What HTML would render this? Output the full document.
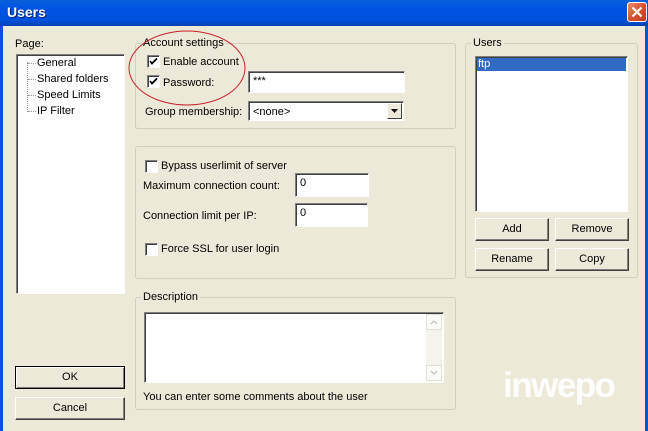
<!DOCTYPE html>
<html><head><meta charset="utf-8"><style>
*{margin:0;padding:0;box-sizing:border-box}
body{width:648px;height:431px;overflow:hidden;background:#ece9d8;font-family:"Liberation Sans",sans-serif;font-size:11px;color:#000;position:relative}
.a{position:absolute;white-space:nowrap}
.title{left:0;top:0;width:648px;height:26px;background:linear-gradient(#0a5fd8,#0054e3 30%,#0050dc 80%,#0841b0)}
.lb{left:0;top:26px;width:3px;height:405px;background:#0a50d8}
.rb{right:0;top:26px;width:3px;height:405px;background:#0a50d8}
.grp{border:1px solid #d0d0bf;border-radius:3px}
.leg{background:#ece9d8;padding:0 2px}
.sunk{background:#fff;border:1px solid;border-color:#7f7f7f #fff #fff #7f7f7f;box-shadow:inset 1px 1px 0 #404040}
.cb{width:13px;height:13px;background:#fff;border:1px solid;border-color:#7f7f7f #fff #fff #7f7f7f;box-shadow:inset 1px 1px 0 #404040}
.btn{border:1px solid;border-color:#fff #404040 #404040 #fff;box-shadow:inset -1px -1px 0 #808080;background:#ece9d8;text-align:center;line-height:21px}
</style></head><body>
<div class="a title"></div>
<div class="a" style="left:7px;top:4px;color:#fff;font-weight:bold;font-size:14px;text-shadow:1px 1px 0 #0a246a">Users</div>
<div class="a" style="left:627px;top:2px;width:20px;height:20px;border:1px solid #fff;border-radius:3px;background:linear-gradient(135deg,#e88a6a,#d9532f 50%,#c23a1a)">
<svg width="18" height="18" viewBox="0 0 18 18" style="position:absolute;left:0;top:0"><path d="M4.5 4.5L13.5 13.5M13.5 4.5L4.5 13.5" stroke="#fff" stroke-width="2.2"/></svg></div>
<div class="a lb"></div><div class="a rb"></div>

<div class="a" style="left:15px;top:38px">Page:</div>
<div class="a sunk" style="left:16px;top:54px;width:109px;height:240px"></div>
<div class="a" style="left:27px;top:62px;width:1px;height:50px;border-left:1px dotted #999"></div>
<div class="a" style="left:28px;top:63px;width:8px;border-top:1px dotted #999"></div>
<div class="a" style="left:28px;top:79px;width:8px;border-top:1px dotted #999"></div>
<div class="a" style="left:28px;top:95px;width:8px;border-top:1px dotted #999"></div>
<div class="a" style="left:28px;top:111px;width:8px;border-top:1px dotted #999"></div>
<div class="a" style="left:37px;top:57px">General</div>
<div class="a" style="left:37px;top:73px">Shared folders</div>
<div class="a" style="left:37px;top:89px">Speed Limits</div>
<div class="a" style="left:37px;top:105px">IP Filter</div>

<div class="a btn" style="left:15px;top:366px;width:110px;height:23px;border:1px solid #000;box-shadow:inset 1px 1px 0 #fff,inset -1px -1px 0 #808080">OK</div>
<div class="a btn" style="left:15px;top:397px;width:110px;height:23px">Cancel</div>

<div class="a grp" style="left:135px;top:43px;width:321px;height:86px"></div>
<div class="a leg" style="left:141px;top:37px">Account settings</div>
<div class="a cb" style="left:147px;top:55px"><svg width="11" height="11" style="position:absolute;left:0;top:0"><path d="M2 5l2 2.5 5-5" stroke="#000" stroke-width="1.8" fill="none"/></svg></div>
<div class="a" style="left:163px;top:56px">Enable account</div>
<div class="a cb" style="left:147px;top:75px"><svg width="11" height="11" style="position:absolute;left:0;top:0"><path d="M2 5l2 2.5 5-5" stroke="#000" stroke-width="1.8" fill="none"/></svg></div>
<div class="a" style="left:163px;top:77px">Password:</div>
<div class="a sunk" style="left:248px;top:71px;width:157px;height:22px;padding:3px 4px">***</div>
<div class="a" style="left:145px;top:106px">Group membership:</div>
<div class="a sunk" style="left:248px;top:101px;width:156px;height:20px;padding:4px 4px">&lt;none&gt;</div>
<div class="a" style="left:387px;top:103px;width:15px;height:16px;background:#ece9d8;border:1px solid;border-color:#fff #404040 #404040 #fff"><svg width="13" height="14"><path d="M3 5h7l-3.5 4z" fill="#000"/></svg></div>

<div class="a grp" style="left:135px;top:146px;width:321px;height:133px"></div>
<div class="a cb" style="left:145px;top:160px"></div>
<div class="a" style="left:161px;top:160px">Bypass userlimit of server</div>
<div class="a" style="left:143px;top:180px">Maximum connection count:</div>
<div class="a sunk" style="left:295px;top:173px;width:74px;height:24px;padding:3px 4px">0</div>
<div class="a" style="left:143px;top:210px">Connection limit per IP:</div>
<div class="a sunk" style="left:295px;top:203px;width:73px;height:24px;padding:3px 4px">0</div>
<div class="a cb" style="left:145px;top:243px"></div>
<div class="a" style="left:161px;top:243px">Force SSL for user login</div>

<div class="a grp" style="left:135px;top:297px;width:321px;height:113px"></div>
<div class="a leg" style="left:141px;top:291px">Description</div>
<div class="a sunk" style="left:144px;top:312px;width:300px;height:71px"></div>
<div class="a" style="left:426px;top:314px;width:16px;height:67px;background:#f4f3ee"></div>
<div class="a" style="left:426px;top:314px;width:16px;height:16px;border:1px solid #e0dfd8;background:#fafaf8"><svg width="14" height="14"><path d="M4 9l3-3 3 3" stroke="#bbb" fill="none"/></svg></div>
<div class="a" style="left:426px;top:365px;width:16px;height:16px;border:1px solid #e0dfd8;background:#fafaf8"><svg width="14" height="14"><path d="M4 5l3 3 3-3" stroke="#bbb" fill="none"/></svg></div>
<div class="a" style="left:143px;top:391px">You can enter some comments about the user</div>

<div class="a grp" style="left:465px;top:43px;width:173px;height:235px"></div>
<div class="a leg" style="left:471px;top:37px">Users</div>
<div class="a sunk" style="left:475px;top:56px;width:153px;height:156px"></div>
<div class="a" style="left:477px;top:58px;width:149px;height:13px;background:#316ac5;color:#fff;padding-left:1px;line-height:13px">ftp</div>
<div class="a btn" style="left:475px;top:218px;width:74px;height:23px">Add</div>
<div class="a btn" style="left:555px;top:218px;width:74px;height:23px">Remove</div>
<div class="a btn" style="left:475px;top:248px;width:74px;height:23px">Rename</div>
<div class="a btn" style="left:555px;top:248px;width:74px;height:23px">Copy</div>

<div class="a" style="left:503px;top:366px;color:#fff;font-weight:bold;font-size:35px;letter-spacing:-1.5px;opacity:.95">inwepo</div>

<svg class="a" style="left:0;top:0" width="648" height="431"><ellipse cx="187" cy="68" rx="58" ry="37" fill="none" stroke="#c8202a" stroke-width="1"/></svg>
</body></html>
